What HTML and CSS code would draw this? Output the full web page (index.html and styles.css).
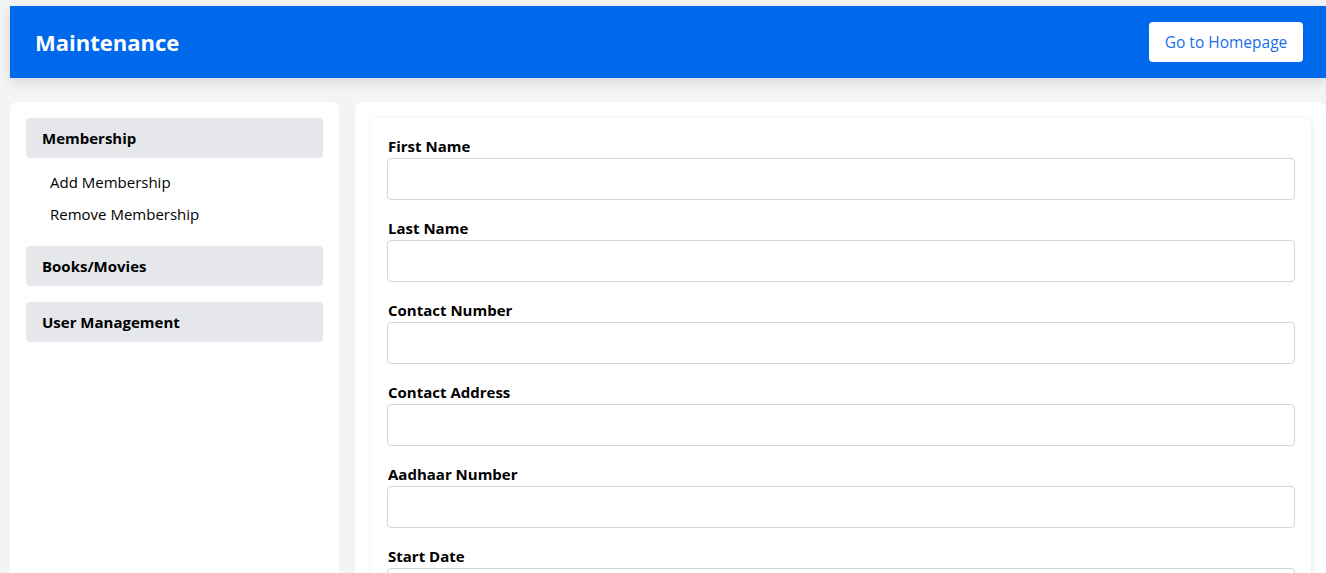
FILE: index.html
```html
<!DOCTYPE html>
<html>
<head>
<meta charset="utf-8">
<link rel="stylesheet" href="styles.css">
</head>
<body>
<header class="topbar">
  <h1 class="brand">Maintenance</h1>
  <button class="home-btn">Go to Homepage</button>
</header>
<div class="layout">
  <aside class="sidebar">
    <div class="group">
      <div class="group-title">Membership</div>
      <ul class="sub">
        <li>Add Membership</li>
        <li>Remove Membership</li>
      </ul>
    </div>
    <div class="group">
      <div class="group-title">Books/Movies</div>
    </div>
    <div class="group">
      <div class="group-title">User Management</div>
    </div>
  </aside>
  <main class="content">
    <form class="form-card">
      <div class="field"><label>First Name</label><input type="text"></div>
      <div class="field"><label>Last Name</label><input type="text"></div>
      <div class="field"><label>Contact Number</label><input type="text"></div>
      <div class="field"><label>Contact Address</label><input type="text"></div>
      <div class="field"><label>Aadhaar Number</label><input type="text"></div>
      <div class="field"><label>Start Date</label><input type="text"></div>
    </form>
  </main>
</div>
</body>
</html>
```

FILE: styles.css
```css
* { box-sizing: border-box; }
html, body { margin: 0; padding: 0; }
body {
  background: #f3f4f6;
  font-family: "Open Sans", "Noto Sans", sans-serif;
  color: #000;
  overflow: hidden;
  padding-top: 6px;
}
.topbar {
  margin-left: 10px;
  height: 72px;
  background: #0069eb;
  display: flex;
  align-items: center;
  justify-content: space-between;
  padding: 0 23px 0 25px;
  box-shadow: 0 4px 12px rgba(0,0,0,0.12);
}
.brand {
  margin: 0;
  color: #fff;
  font-size: 22px;
  font-weight: 700;
}
.home-btn {
  background: #fff;
  border: none;
  border-radius: 4px;
  height: 40px;
  width: 154px;
  color: #1a6fe8;
  font-family: inherit;
  font-size: 15.5px;
}
.layout {
  display: flex;
  gap: 16px;
  margin: 24px 0 0 10px;
  align-items: stretch;
}
.sidebar {
  width: 329px;
  flex: none;
  background: #fff;
  border-radius: 8px;
  padding: 16px;
  min-height: 500px;
  display: flex;
  flex-direction: column;
  gap: 16px;
}
.group-title {
  background: #e5e7eb;
  border-radius: 4px;
  height: 40px;
  line-height: 40px;
  padding: 0 16px;
  font-weight: 700;
  font-size: 15px;
}
.sub {
  list-style: none;
  margin: 8px 0 0;
  padding: 0 0 0 24px;
  font-size: 15px;
}
.sub li {
  height: 32px;
  line-height: 32px;
}
.content {
  flex: 1;
  background: #fff;
  border-radius: 8px 8px 0 0;
  padding: 16px 15px 0 16px;
}
.form-card {
  background: #fff;
  border-radius: 8px;
  box-shadow: 1px 1px 6px rgba(0,0,0,0.1);
  padding: 16px;
  display: flex;
  flex-direction: column;
  gap: 16px;
}
.field label {
  display: block;
  font-weight: 700;
  font-size: 15px;
  line-height: 24px;
  padding-left: 1px;
}
.field input {
  display: block;
  width: 100%;
  height: 42px;
  border: 1px solid #d1d5db;
  border-radius: 4px;
  font-family: inherit;
  font-size: 15px;
  padding: 0 10px;
}
```
